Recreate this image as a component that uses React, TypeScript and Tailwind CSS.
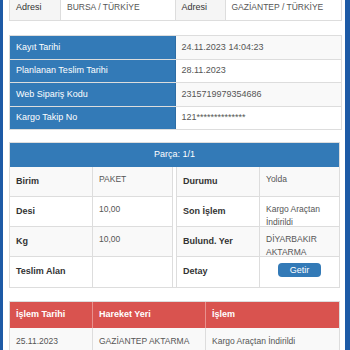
const font = { fontFamily: '"Liberation Sans", Arial, sans-serif' };

function InfoRow({ label, value, striped }: { label: string; value: string; striped?: boolean }) {
  return (
    <div className="grid grid-cols-2 border-b border-[#ddd] last:border-b-0">
      <div className="bg-[#337ab7] text-white px-[6px] h-[22.5px] flex items-center border-r border-[#2e6da4]">{label}</div>
      <div className={`${striped ? 'bg-[#f9f9f9]' : 'bg-white'} text-[#555] px-[6px] flex items-center`}>{value}</div>
    </div>
  );
}

function PartCell({ label, value, striped }: { label: string; value: React.ReactNode; striped?: boolean }) {
  return (
    <div className={`flex h-[30px] border-b border-[#ddd] last:border-b-0 ${striped ? 'bg-[#f9f9f9]' : 'bg-white'}`}>
      <div className="w-[83px] shrink-0 border-r border-[#ddd] px-[6px] pt-[8px] font-bold text-[#333]">{label}</div>
      <div className="flex-1 px-[6px] pt-[6px] text-[#555] text-[8.5px] leading-[13px]">{value}</div>
    </div>
  );
}

export default function App() {
  return (
    <div className="w-[350px] h-[350px] overflow-hidden bg-white border-l-[3px] border-r-[5px] border-[#1d5aa6] pl-[6px] pr-[3px] text-[9px]" style={font}>
      {/* Adres */}
      <div className="-mt-[6px] border border-[#ddd] grid grid-cols-2 h-[27px]">
        <div className="flex">
          <div className="w-[51px] bg-[#f5f5f5] border-r border-[#ddd] px-[6px] flex items-center text-[#333]">Adresi</div>
          <div className="flex-1 px-[6px] flex items-center text-[#555] text-[8.5px] border-r border-[#ddd]">BURSA / TÜRKİYE</div>
        </div>
        <div className="flex">
          <div className="w-[50px] bg-[#f5f5f5] border-r border-[#ddd] px-[6px] flex items-center text-[#333]">Adresi</div>
          <div className="flex-1 px-[6px] flex items-center text-[#555] text-[8.5px]">GAZİANTEP / TÜRKİYE</div>
        </div>
      </div>

      {/* Bilgiler */}
      <div className="mt-[14px] border border-[#ddd]">
        <InfoRow label="Kayıt Tarihi" value="24.11.2023 14:04:23" striped />
        <InfoRow label="Planlanan Teslim Tarihi" value="28.11.2023" />
        <InfoRow label="Web Sipariş Kodu" value="2315719979354686" striped />
        <InfoRow label="Kargo Takip No" value="121**************" />
      </div>

      {/* Parça */}
      <div className="mt-[12px] border border-[#ddd] mr-[2px]">
        <div className="bg-[#337ab7] text-white h-[24px] flex items-center justify-center">Parça: 1/1</div>
        <div className="flex gap-[3px] bg-white">
          <div className="flex-1 border-r border-[#ddd]">
            <PartCell label="Birim" value="PAKET" striped />
            <PartCell label="Desi" value="10,00" />
            <PartCell label="Kg" value="10,00" striped />
            <PartCell label="Teslim Alan" value="" />
          </div>
          <div className="flex-1 border-l border-[#ddd]">
            <PartCell label="Durumu" value="Yolda" striped />
            <PartCell label="Son İşlem" value={<>Kargo Araçtan<br />İndirildi</>} />
            <PartCell label="Bulund. Yer" value={<>DİYARBAKIR<br />AKTARMA</>} striped />
            <PartCell
              label="Detay"
              value={
                <div className="flex justify-center">
                  <span className="bg-[#337ab7] text-white rounded-[4px] px-[12px] h-[14px] flex items-center text-[9px]">Getir</span>
                </div>
              }
            />
          </div>
        </div>
      </div>

      {/* Hareketler */}
      <div className="mt-[13px] border border-[#ddd] mr-[2px]">
        <div className="flex bg-[#d9534f] text-white font-bold h-[26px]">
          <div className="w-[83px] px-[6px] flex items-center border-r border-[#e8918e]">İşlem Tarihi</div>
          <div className="w-[113px] px-[6px] flex items-center border-r border-[#e8918e]">Hareket Yeri</div>
          <div className="flex-1 px-[6px] flex items-center">İşlem</div>
        </div>
        <div className="flex bg-[#f9f9f9] text-[#555] text-[8.5px]">
          <div className="w-[83px] px-[6px] pt-[7px] border-r border-[#ddd] leading-[13px]">25.11.2023<br />16:07:59</div>
          <div className="w-[113px] px-[6px] pt-[7px] border-r border-[#ddd]">GAZİANTEP AKTARMA</div>
          <div className="flex-1 px-[6px] pt-[7px]">Kargo Araçtan İndirildi</div>
        </div>
      </div>
    </div>
  );
}
